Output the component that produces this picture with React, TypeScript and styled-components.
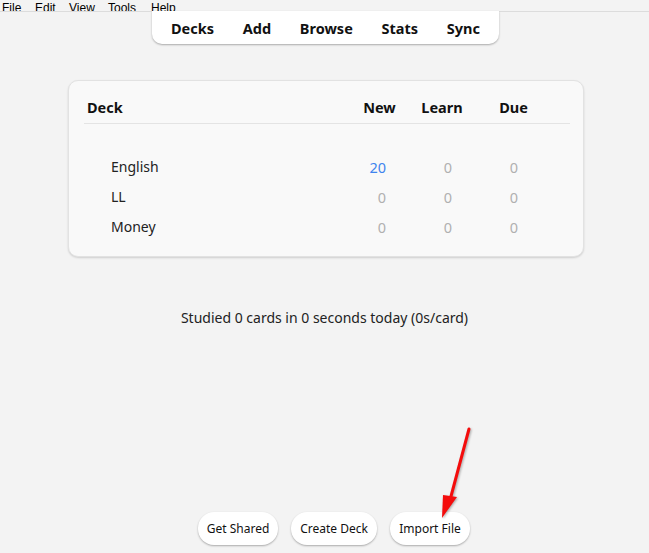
import React from "react";
import styled, { createGlobalStyle } from "styled-components";

const GlobalStyle = createGlobalStyle`
  html, body {
    margin: 0;
    padding: 0;
    background: #f3f3f3;
    font-family: "Noto Sans", "Segoe UI", sans-serif;
    color: #1a1a1a;
  }
`;

const Page = styled.div`
  position: relative;
  display: flex;
  flex-direction: column;
  align-items: center;
  min-height: 553px;
  overflow: hidden;
`;

const MenuBar = styled.div`
  align-self: stretch;
  display: flex;
  align-items: flex-end;
  height: 11px;
  overflow: hidden;
  border-bottom: 1px solid #dcdcdc;
  background: #f3f3f3;
`;

const MenuItem = styled.span<{ $w: number }>`
  box-sizing: border-box;
  width: ${({ $w }) => $w}px;
  padding-left: 2px;
  font-family: "Liberation Sans", sans-serif;
  font-size: 12px;
  line-height: 12px;
  margin-bottom: -3px;
  color: #000;
`;

const Toolbar = styled.nav`
  display: flex;
  align-items: center;
  justify-content: space-between;
  width: 347px;
  height: 33px;
  margin-top: -1px;
  margin-left: 2px;
  padding: 0 19px;
  box-sizing: border-box;
  background: #fff;
  border-radius: 0 0 10px 10px;
  box-shadow: 0 1px 2px rgba(0, 0, 0, 0.3);
`;

const ToolLink = styled.span`
  font-size: 14.5px;
  font-weight: 700;
  color: #111;
`;

const Card = styled.section`
  width: 516px;
  margin-top: 36px;
  margin-left: 3px;
  padding: 15px 15px 14px;
  box-sizing: border-box;
  background: #f9f9f9;
  border: 1px solid #e2e2e2;
  border-radius: 10px;
  box-shadow: 0 1px 2px rgba(0, 0, 0, 0.15);
`;

const Grid = styled.div`
  display: grid;
  grid-template-columns: 262px 67px 58px 85px 14px;
`;

const HeadCell = styled.div<{ $left?: boolean }>`
  font-size: 14.5px;
  font-weight: 700;
  color: #111;
  height: 22px;
  line-height: 22px;
  text-align: ${({ $left }) => ($left ? "left" : "center")};
  padding-left: ${({ $left }) => ($left ? "3px" : "0")};
  padding-bottom: 5px;
  border-bottom: 1px solid #e4e4e4;
`;

const Spacer = styled.div`
  grid-column: 1 / -1;
  height: 28px;
`;

const NameCell = styled.div`
  font-size: 14px;
  line-height: 30px;
  padding-left: 27px;
  color: #222;
`;

const CountCell = styled.div<{ $pad: number; $blue?: boolean }>`
  font-size: 14.5px;
  line-height: 30px;
  text-align: right;
  padding-right: ${({ $pad }) => $pad}px;
  color: ${({ $blue }) => ($blue ? "#3f84ee" : "#b0b0b0")};
`;

const Studied = styled.p`
  margin: 51px 0 0;
  font-size: 14px;
  color: #222;
`;

const Footer = styled.div`
  margin-top: auto;
  margin-bottom: 8px;
  margin-left: 19px;
  display: flex;
  gap: 13px;
`;

const PillButton = styled.button<{ $w: number }>`
  width: ${({ $w }) => $w}px;
  height: 33px;
  border: none;
  border-radius: 16px;
  background: #fff;
  box-shadow: 0 1px 2px rgba(0, 0, 0, 0.3);
  font-family: "Noto Sans", "Segoe UI", sans-serif;
  font-size: 12px;
  color: #111;
  padding: 0;
`;

const Arrow = styled.svg`
  position: absolute;
  left: 430px;
  top: 420px;
  filter: drop-shadow(1px 1px 1px rgba(0, 0, 0, 0.3));
`;

const menus: [string, string, number][] = [
  ["F", "ile", 33],
  ["E", "dit", 34],
  ["V", "iew", 39],
  ["T", "ools", 43],
  ["H", "elp", 40],
];

const decks = [
  { name: "English", counts: [20, 0, 0] },
  { name: "LL", counts: [0, 0, 0] },
  { name: "Money", counts: [0, 0, 0] },
];

const pads = [27, 19, 38];

export default function App() {
  return (
    <>
      <GlobalStyle />
      <Page>
        <MenuBar>
          {menus.map(([u, rest, w]) => (
            <MenuItem key={u} $w={w}>
              <u>{u}</u>
              {rest}
            </MenuItem>
          ))}
        </MenuBar>
        <Toolbar>
          <ToolLink>Decks</ToolLink>
          <ToolLink>Add</ToolLink>
          <ToolLink>Browse</ToolLink>
          <ToolLink>Stats</ToolLink>
          <ToolLink>Sync</ToolLink>
        </Toolbar>
        <Card>
          <Grid>
            <HeadCell $left>Deck</HeadCell>
            <HeadCell>New</HeadCell>
            <HeadCell>Learn</HeadCell>
            <HeadCell>Due</HeadCell>
            <HeadCell />
            <Spacer />
            {decks.map((d) => (
              <React.Fragment key={d.name}>
                <NameCell>{d.name}</NameCell>
                {d.counts.map((c, i) => (
                  <CountCell key={i} $pad={pads[i]} $blue={c > 0}>
                    {c}
                  </CountCell>
                ))}
                <div />
              </React.Fragment>
            ))}
          </Grid>
        </Card>
        <Studied>Studied 0 cards in 0 seconds today (0s/card)</Studied>
        <Footer>
          <PillButton $w={80}>Get Shared</PillButton>
          <PillButton $w={86}>Create Deck</PillButton>
          <PillButton $w={80}>Import File</PillButton>
        </Footer>
        <Arrow width="50" height="105" viewBox="0 0 50 105">
          <line x1="39" y1="9" x2="20" y2="80" stroke="#f40c0c" strokeWidth="3" strokeLinecap="round" />
          <polygon points="12,98 13,75 27,77" fill="#f40c0c" />
        </Arrow>
      </Page>
    </>
  );
}
